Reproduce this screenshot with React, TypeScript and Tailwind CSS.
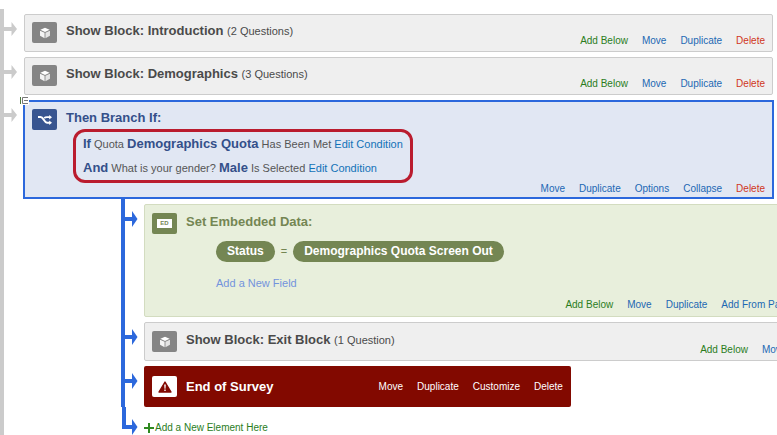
import type { ReactNode } from "react";
import clsx from "clsx";

type Action = { label: string; tone?: "add" | "delete" };

const blockActions: Action[] = [
  { label: "Add Below", tone: "add" },
  { label: "Move" },
  { label: "Duplicate" },
  { label: "Delete", tone: "delete" },
];

const branchActions: Action[] = [
  { label: "Move" },
  { label: "Duplicate" },
  { label: "Options" },
  { label: "Collapse" },
  { label: "Delete", tone: "delete" },
];

const embeddedActions: Action[] = [
  { label: "Add Below", tone: "add" },
  { label: "Move" },
  { label: "Duplicate" },
  { label: "Add From Panel" },
  { label: "Options" },
  { label: "Delete", tone: "delete" },
];

const endActions: Action[] = [
  { label: "Move" },
  { label: "Duplicate" },
  { label: "Customize" },
  { label: "Delete" },
];

const Actions = ({ items, light }: { items: Action[]; light?: boolean }) => (
  <nav className="flex justify-end gap-3.5 text-[10px] leading-3 whitespace-nowrap">
    {items.map((item) => (
      <a
        key={item.label}
        href="#"
        className={clsx(
          light && "text-white",
          !light && item.tone === "add" && "text-[#2a7d1c]",
          !light && item.tone === "delete" && "text-[#d0361c]",
          !light && !item.tone && "text-[#1c68b3]"
        )}
      >
        {item.label}
      </a>
    ))}
  </nav>
);

const CubeIcon = () => (
  <svg viewBox="0 0 14 14" className="h-3 w-3">
    <path d="M7 1 12.4 3.3 7 5.8 1.6 3.3Z" fill="#fff" />
    <path d="M1.2 4.3 6.5 6.7V13L1.2 10.2Z" fill="#f4f4f4" />
    <path d="M12.8 4.3 7.5 6.7V13l5.3-2.8Z" fill="#e4e4e4" />
  </svg>
);

const ShuffleIcon = () => (
  <svg viewBox="0 0 14 10" className="h-2.5 w-3.5" fill="none" stroke="#fff" strokeWidth="2">
    <path d="M0 2h2.5C5.5 2 6 7.7 9 7.7h3" />
    <path d="M6.2 3.2C7 2.4 7.6 2.2 9 2.2h3" strokeWidth="1.8" />
    <path d="M11.2 0 14 2.2 11.2 4.5ZM11.2 5.4 14 7.7 11.2 10Z" fill="#fff" stroke="none" />
  </svg>
);

const WarningIcon = () => (
  <svg viewBox="0 0 14 12" className="h-3 w-3.5">
    <path d="M7 1 13 11H1Z" fill="#820900" stroke="#820900" strokeWidth="1.4" strokeLinejoin="round" />
    <path d="M6.2 3.6h1.6L7.5 7.8h-1ZM6.3 8.6h1.4V10H6.3Z" fill="#fff" />
  </svg>
);

const IconTile = ({ className, children }: { className: string; children: ReactNode }) => (
  <span className={clsx("flex h-[21px] w-[25px] shrink-0 items-center justify-center rounded-xs", className)}>
    {children}
  </span>
);

// One step of the flow: a piece of rail with its arrow, then the element itself
const FlowItem = ({ nested, grow, children }: { nested?: boolean; grow?: boolean; children: ReactNode }) => (
  <li className={clsx("flex", grow && "grow")}>
    <div className={clsx("flex w-6 shrink-0", nested && "pl-px")}>
      <div className={clsx("w-1", nested ? "bg-[#2c68dc]" : "bg-[#cbcbcb]")} />
      {nested ? (
        <svg viewBox="0 0 13 16" className="mt-3 h-4 w-[13px]" fill="#2c68dc">
          <path d="M0 6h7V0l5.5 8L7 16V10H0Z" />
        </svg>
      ) : (
        <svg viewBox="0 0 13 16" className="mt-3 h-4 w-[13px]" fill="#cbcbcb">
          <path d="M0 6h7.5V1L13 8l-5.5 7V10H0Z" />
        </svg>
      )}
    </div>
    <div className="min-w-0 grow pt-[5px]">{children}</div>
  </li>
);

const Block = ({ name, count, nested }: { name: string; count: string; nested?: boolean }) => (
  <section
    className={clsx(
      "flex gap-[9px] rounded-xs border border-[#cccccc] bg-[#efefef] px-[7px] pb-1",
      nested ? "pt-2" : "pt-[7px]"
    )}
  >
    <IconTile className="mb-1 bg-[#858585]">
      <CubeIcon />
    </IconTile>
    <h2 className="grow text-[13px] leading-[18px] font-bold text-[#4a4a4a]">
      Show Block: {name} <span className="text-[11px] font-normal">({count})</span>
    </h2>
    <div className="self-end">
      <Actions items={blockActions} />
    </div>
  </section>
);

const Pill = ({ children }: { children: ReactNode }) => (
  <span className="rounded-full bg-[#748653] px-[11px] text-xs leading-[21px] font-bold text-white">{children}</span>
);

const EmbeddedData = () => (
  <section className="rounded-xs border border-[#d3dcc0] bg-[#e8efdc] px-[7px] pt-2 pb-[5px]">
    <div className="flex gap-[9px]">
      <IconTile className="bg-[#748653]">
        <span className="bg-white px-[3px] text-[6px] leading-[9px] font-bold text-[#748653]">ED</span>
      </IconTile>
      <div className="text-[#748653]">
        <h2 className="text-[13px] leading-[18px] font-bold">Set Embedded Data:</h2>
        <div className="mt-2.5 ml-[30px] flex items-center gap-1.5 text-[11px]">
          <Pill>Status</Pill>=<Pill>Demographics Quota Screen Out</Pill>
        </div>
        <a href="#" className="mt-[13px] ml-[30px] block text-[11px] leading-4 text-[#7393dc]">
          Add a New Field
        </a>
      </div>
    </div>
    <div className="mt-2">
      <Actions items={embeddedActions} />
    </div>
  </section>
);

const Branch = () => (
  <section className="relative -mx-px border-2 border-[#2c68dc] bg-[#e1e7f3] px-[7px] pt-[7px] pb-0.5">
    <svg viewBox="0 0 9 9" className="absolute -top-[6px] -left-[5px] h-[9px] w-[9px]">
      <path d="M0 0h9v9H0Z" fill="#fff" />
      <path d="M0.5 1v7" stroke="#4d7a3c" />
      <path d="M8 1.5H2.5v6H8M4 4.5h4" fill="none" stroke="#777" />
    </svg>
    <div className="flex gap-[9px]">
      <IconTile className="bg-[#385590]">
        <ShuffleIcon />
      </IconTile>
      <div>
        <h2 className="text-[13px] leading-[18px] font-bold text-[#34508a]">Then Branch If:</h2>
        <div className="mt-0.5 ml-[7px] w-fit rounded-xl border-3 border-[#ba1c2e] pr-[7px] pl-[7px] text-[11px] leading-6 text-[#555]">
          <p>
            <b className="text-[13px] text-[#34508a]">If</b> Quota{" "}
            <b className="text-[13px] text-[#34508a]">Demographics Quota</b> Has Been Met{" "}
            <a href="#" className="text-[#1272b8]">Edit Condition</a>
          </p>
          <p>
            <b className="text-[13px] text-[#34508a]">And</b> What is your gender?{" "}
            <b className="text-[13px] text-[#34508a]">Male</b> Is Selected{" "}
            <a href="#" className="text-[#1272b8]">Edit Condition</a>
          </p>
        </div>
      </div>
    </div>
    <Actions items={branchActions} />
  </section>
);

const EndOfSurvey = () => (
  <section className="flex w-[57%] items-center gap-[9px] rounded-xs bg-[#820900] px-2 py-2.5">
    <IconTile className="bg-white">
      <WarningIcon />
    </IconTile>
    <h2 className="grow text-[13px] leading-[18px] font-bold text-white">End of Survey</h2>
    <Actions items={endActions} light />
  </section>
);

const App = () => (
  <main className="flex min-h-screen flex-col overflow-x-hidden bg-white pt-[9px] pr-1 font-['Liberation_Sans',Arial,sans-serif]">
    <ul className="flex grow flex-col">
      <FlowItem>
        <Block name="Introduction" count="2 Questions" />
      </FlowItem>
      <FlowItem>
        <Block name="Demographics" count="3 Questions" />
      </FlowItem>
      <FlowItem grow>
        <Branch />
        {/* Children keep the full width of their parent, so they run past the right edge */}
        <ul className="-mr-[120px] ml-24">
          <FlowItem nested>
            <EmbeddedData />
          </FlowItem>
          <FlowItem nested>
            <Block name="Exit Block" count="1 Question" nested />
          </FlowItem>
          <FlowItem nested>
            <EndOfSurvey />
          </FlowItem>
          <li className="flex">
            <svg viewBox="0 0 24 28" className="h-7 w-6 shrink-0" fill="#2c68dc">
              <path d="M2 0h4v18h6V12l5.5 8L12 28V22H2Z" />
            </svg>
            <a href="#" className="mt-3.5 flex h-3.5 items-center gap-px text-[10px] leading-3 text-[#2a7d1c]">
              <svg viewBox="0 0 10 10" className="h-2.5 w-2.5" stroke="#2f8a20" strokeWidth="2">
                <path d="M5 0v10M0 5h10" />
              </svg>
              Add a New Element Here
            </a>
          </li>
        </ul>
      </FlowItem>
    </ul>
  </main>
);

export default App;
